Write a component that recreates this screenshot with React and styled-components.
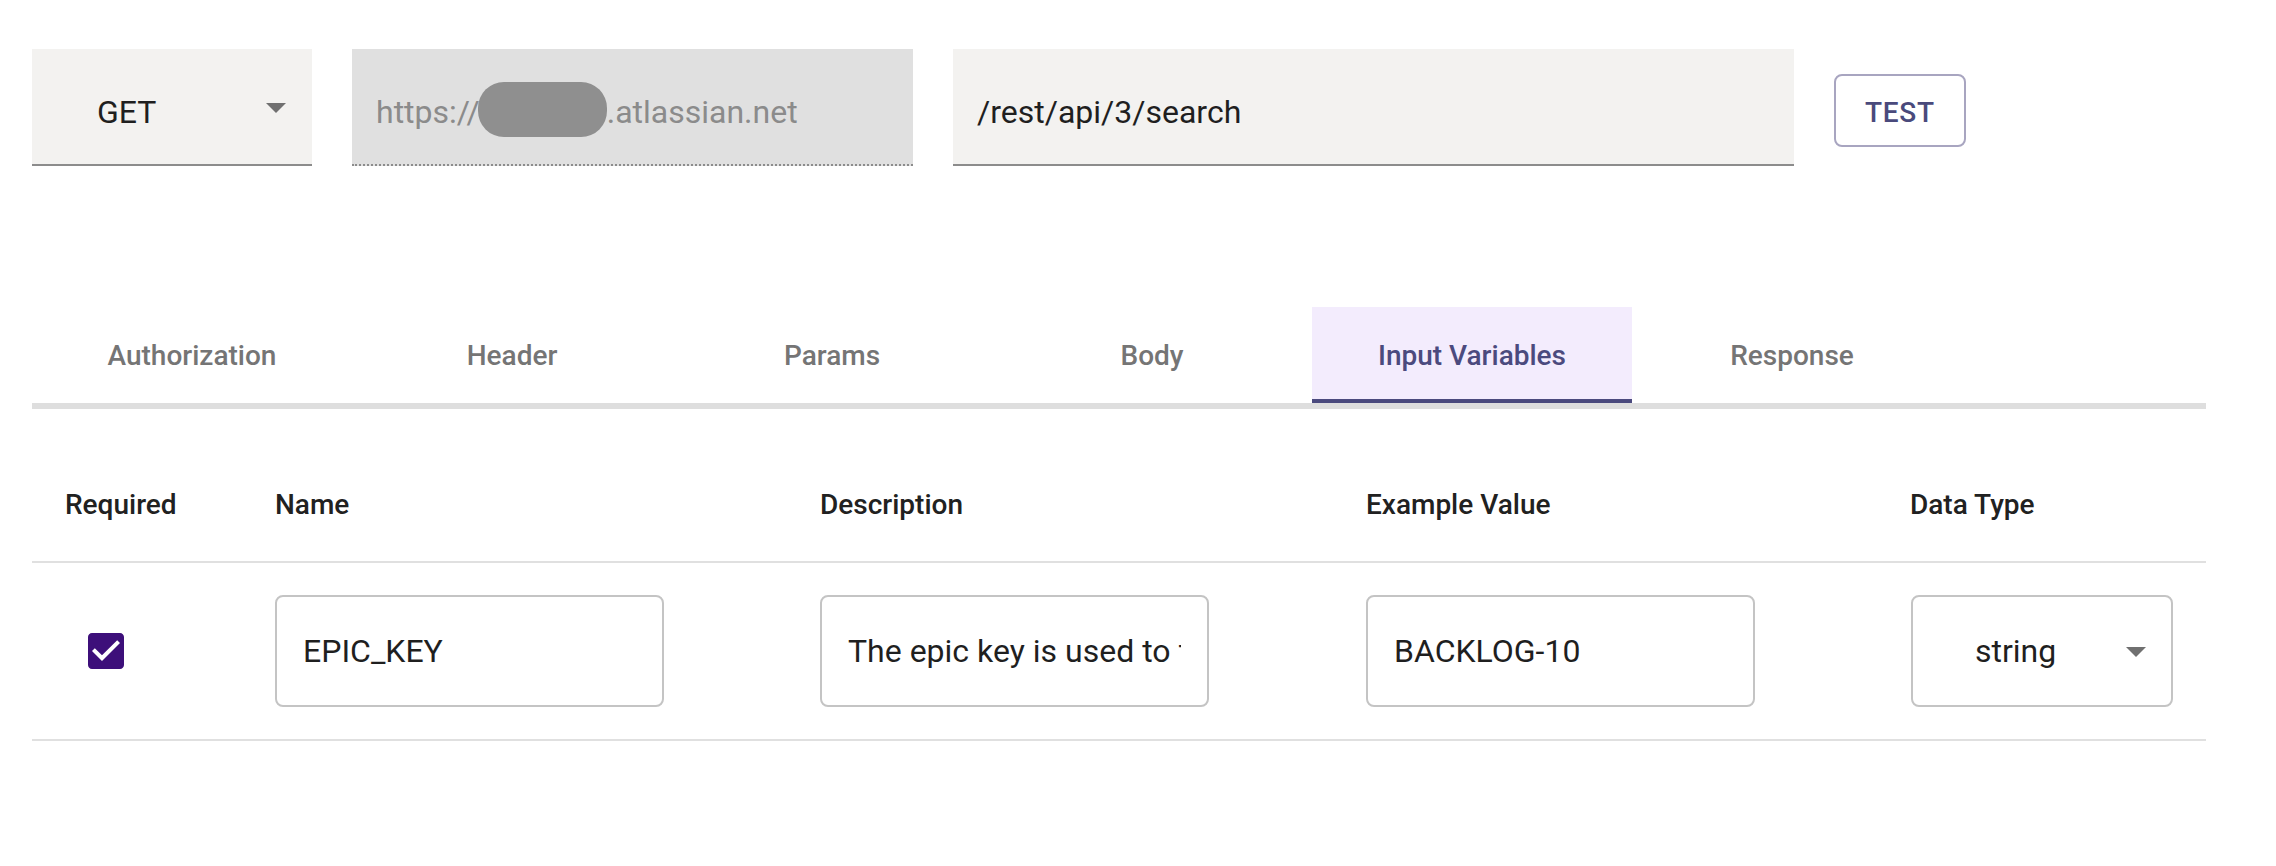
import styled, { createGlobalStyle } from "styled-components";

const GlobalStyle = createGlobalStyle`
  body {
    margin: 0;
    background: #fff;
    font-family: Roboto, "Liberation Sans", sans-serif;
  }
`

const Page = styled.div`
  padding: 49px 0 0 32px;
  width: 2174px;
`

const TopBar = styled.div`
  display: flex;
  align-items: flex-start;
  gap: 40px;
`

const FilledField = styled.div`
  box-sizing: border-box;
  display: flex;
  align-items: center;
  width: ${p => p.width}px;
  height: 117px;
  padding: 10px 12px 0 ${p => p.padLeft || 24}px;
  background: ${p => (p.disabled ? "#e0e0e0" : "#f3f2f0")};
  border-bottom: 2px ${p => (p.disabled ? "dotted #8c8c8c" : "solid #8c8c8c")};
  font-size: 32px;
  color: ${p => (p.disabled ? "#8b8b8b" : "#1f1f1f")};
  white-space: nowrap;
`

const Grow = styled.span`
  flex: 1;
`

const ArrowBox = styled.span`
  display: flex;
  margin-top: ${p => p.shift || 0}px;
`

const Blob = styled.span`
  display: inline-block;
  width: 129px;
  height: 55px;
  border-radius: 26px;
  background: #8f8f8f;
  vertical-align: middle;
  margin: -4px 0 0 -2px;
`

const TestButton = styled.button`
  box-sizing: border-box;
  margin-top: 25px;
  height: 73px;
  padding: 4px 29px 0;
  border: 2px solid #a8a5c0;
  border-radius: 8px;
  background: #fff;
  color: #4a4a7c;
  font-family: Roboto, "Liberation Sans", sans-serif;
  font-size: 28px;
  font-weight: 500;
  letter-spacing: 0.7px;
  cursor: pointer;
`

const Tabs = styled.div`
  display: flex;
  margin-top: 141px;
  border-bottom: 6px solid #dedede;
`

const Tab = styled.div`
  width: 320px;
  height: 96px;
  display: flex;
  align-items: center;
  justify-content: center;
  font-size: 28px;
  font-weight: 500;
  color: ${p => (p.active ? "#4b4a7e" : "#757575")};
  background: ${p => (p.active ? "#f3ecfd" : "transparent")};
  box-shadow: ${p => (p.active ? "inset 0 -4px 0 #4b4a7e" : "none")};
`

const Table = styled.div`
  margin-top: 38px;
  display: grid;
  grid-template-columns: 210px 545px 546px 544px 329px;
`

const HeadCell = styled.div`
  height: 114px;
  display: flex;
  align-items: center;
  padding: 0 33px;
  border-bottom: 2px solid #e0e0e0;
  font-size: 28px;
  font-weight: 500;
  color: #212121;
`

const BodyCell = styled.div`
  display: flex;
  align-items: center;
  padding: 32px 33px;
  border-bottom: 2px solid #e0e0e0;
`

const CheckWrap = styled.span`
  display: flex;
  margin-left: 17px;
`

const TextInput = styled.input`
  box-sizing: border-box;
  width: 389px;
  height: 112px;
  padding: 0 26px;
  border: 2px solid #c4c4c4;
  border-radius: 8px;
  background: #fff;
  font-family: Roboto, "Liberation Sans", sans-serif;
  font-size: 32px;
  color: #1f1f1f;
  outline: none;
`

const SelectBox = styled.div`
  box-sizing: border-box;
  width: 262px;
  height: 112px;
  margin-left: 1px;
  display: flex;
  align-items: center;
  padding: 0 11px 0 62px;
  border: 2px solid #c4c4c4;
  border-radius: 8px;
  font-size: 32px;
  color: #1f1f1f;
`

const DropArrow = () => (
  <svg width="48" height="48" viewBox="0 0 24 24">
    <path d="M7 10l5 5 5-5z" fill="#707070" />
  </svg>
)

const CheckIcon = () => (
  <svg width="48" height="48" viewBox="0 0 24 24">
    <path
      fill="#3d0f7a"
      d="M19 3H5c-1.11 0-2 .9-2 2v14c0 1.1.89 2 2 2h14c1.11 0 2-.9 2-2V5c0-1.1-.89-2-2-2zm-9 14l-5-5 1.41-1.41L10 14.17l7.59-7.59L19 8l-9 9z"
    />
  </svg>
)

const tabs = ["Authorization", "Header", "Params", "Body", "Input Variables", "Response"]
const columns = ["Required", "Name", "Description", "Example Value", "Data Type"]

const App = () => {
  return (
    <>
      <GlobalStyle />
      <Page>
        <TopBar>
          <FilledField width={280} padLeft={65}>
            GET
            <Grow />
            <ArrowBox shift={-10}><DropArrow /></ArrowBox>
          </FilledField>
          <FilledField width={561} disabled>
            https://<Blob />.atlassian.net
          </FilledField>
          <FilledField width={841}>/rest/api/3/search</FilledField>
          <TestButton>TEST</TestButton>
        </TopBar>

        <Tabs>
          {tabs.map(t => (
            <Tab key={t} active={t === "Input Variables"}>{t}</Tab>
          ))}
        </Tabs>

        <Table>
          {columns.map(c => (
            <HeadCell key={c}>{c}</HeadCell>
          ))}
          <BodyCell>
            <CheckWrap><CheckIcon /></CheckWrap>
          </BodyCell>
          <BodyCell>
            <TextInput readOnly value="EPIC_KEY" />
          </BodyCell>
          <BodyCell>
            <TextInput readOnly value="The epic key is used to filter the issues" />
          </BodyCell>
          <BodyCell>
            <TextInput readOnly value="BACKLOG-10" />
          </BodyCell>
          <BodyCell>
            <SelectBox>
              string
              <Grow />
              <ArrowBox><DropArrow /></ArrowBox>
            </SelectBox>
          </BodyCell>
        </Table>
      </Page>
    </>
  )
}

export default App;
